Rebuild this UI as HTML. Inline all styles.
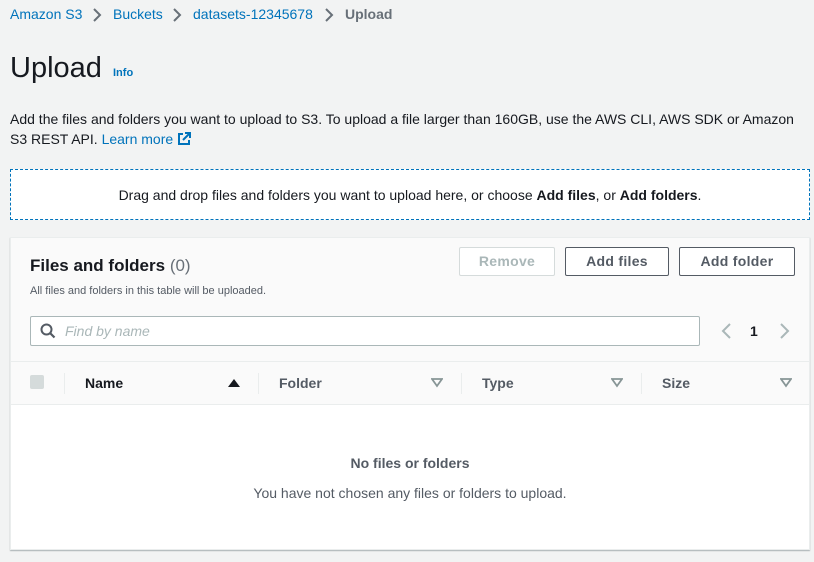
<!DOCTYPE html>
<html><head><meta charset="utf-8"><style>
*{box-sizing:border-box;margin:0;padding:0}
body{width:814px;height:562px;background:#f2f3f3;font-family:"Liberation Sans",sans-serif;color:#16191f;position:relative;overflow:hidden}
.a{position:absolute;white-space:nowrap}
.lnk{color:#0073bb}
.btn{position:absolute;top:247px;height:29px;border:1px solid #545b64;border-radius:2px;background:#fff;font-size:14px;font-weight:bold;color:#545b64;text-align:center;line-height:27px;letter-spacing:.3px}
.th{position:absolute;top:375px;font-size:14px;font-weight:bold;color:#545b64}
.sep{position:absolute;top:373px;width:1px;height:21px;background:#eaeded}
.tri{position:absolute;top:378px}
</style></head><body>
<div class="a" style="left:10px;top:6px;font-size:14px"><span class="lnk">Amazon S3</span></div>
<svg class="a" style="left:92px;top:8px" width="10" height="14"><path d="M2 1l6 6-6 6" stroke="#687078" stroke-width="2" fill="none"/></svg>
<div class="a lnk" style="left:113px;top:6px;font-size:14px">Buckets</div>
<svg class="a" style="left:172px;top:8px" width="10" height="14"><path d="M2 1l6 6-6 6" stroke="#687078" stroke-width="2" fill="none"/></svg>
<div class="a lnk" style="left:193px;top:6px;font-size:14px">datasets-12345678</div>
<svg class="a" style="left:324px;top:8px" width="10" height="14"><path d="M2 1l6 6-6 6" stroke="#687078" stroke-width="2" fill="none"/></svg>
<div class="a" style="left:345px;top:6px;font-size:14px;font-weight:bold;color:#687078">Upload</div>

<div class="a" style="left:10px;top:52px;font-size:29px;color:#16191f">Upload</div>
<div class="a lnk" style="left:113px;top:67px;font-size:11px;font-weight:bold">Info</div>

<div class="a" style="left:10px;top:109px;font-size:14px;line-height:20px">Add the files and folders you want to upload to S3. To upload a file larger than 160GB, use the AWS CLI, AWS SDK or Amazon<br>S3 REST API. <span class="lnk">Learn more</span> <svg width="14" height="14" style="vertical-align:-2px"><path d="M6 2H2v10h10V8" stroke="#0073bb" stroke-width="2" fill="none"/><path d="M8 1h5v5M13 1L6 8" stroke="#0073bb" stroke-width="2" fill="none"/></svg></div>

<div class="a" style="left:10px;top:169px;width:800px;height:51px;border:1px dashed #0073bb;background:#fff;text-align:center;line-height:51px;font-size:14px">Drag and drop files and folders you want to upload here, or choose <b>Add files</b>, or <b>Add folders</b>.</div>

<div class="a" style="left:10px;top:237px;width:800px;height:313px;background:#fff;border:1px solid #eaeded;box-shadow:0 1px 1px 0 rgba(0,28,36,.3)">
 <div style="position:absolute;left:0;top:0;width:798px;height:167px;background:#fafafa;border-bottom:1px solid #eaeded"></div>
 <div style="position:absolute;left:0;top:123px;width:798px;height:1px;background:#eaeded"></div>
</div>
<div class="a" style="left:30px;top:256px;font-size:17px;font-weight:bold">Files and folders <span style="font-weight:normal;color:#687078">(0)</span></div>
<div class="a" style="left:30px;top:285px;font-size:11px;color:#545b64">All files and folders in this table will be uploaded.</div>
<div class="btn" style="left:459px;width:96px;border-color:#d5dbdb;color:#aab7b8">Remove</div>
<div class="btn" style="left:565px;width:104px">Add files</div>
<div class="btn" style="left:679px;width:116px">Add folder</div>

<div class="a" style="left:30px;top:316px;width:670px;height:30px;border:1px solid #aab7b8;border-radius:2px;background:#fff"></div>
<svg class="a" style="left:40px;top:322px" width="16" height="18"><circle cx="6.5" cy="7.5" r="5" stroke="#545b64" stroke-width="2" fill="none"/><path d="M10 11l4.5 4.5" stroke="#545b64" stroke-width="2.2"/></svg>
<div class="a" style="left:65px;top:323px;font-size:14px;font-style:italic;color:#aab7b8">Find by name</div>
<svg class="a" style="left:720px;top:322px" width="12" height="18"><path d="M10 2L3 9l7 7" stroke="#aab7b8" stroke-width="2" fill="none"/></svg>
<div class="a" style="left:750px;top:323px;font-size:14px;font-weight:bold">1</div>
<svg class="a" style="left:779px;top:322px" width="12" height="18"><path d="M2 2l7 7-7 7" stroke="#aab7b8" stroke-width="2" fill="none"/></svg>

<div class="a" style="left:30px;top:375px;width:14px;height:14px;background:#d5dbdb;border-radius:2px"></div>
<div class="sep" style="left:64px"></div>
<div class="th" style="left:85px;color:#16191f">Name</div>
<svg class="tri" style="left:228px" width="12" height="10"><path d="M0 9L6 1l6 8z" fill="#16191f"/></svg>
<div class="sep" style="left:258px"></div>
<div class="th" style="left:279px">Folder</div>
<svg class="tri" style="left:431px" width="12" height="10"><path d="M1 1h10L6 8z" stroke="#879596" stroke-width="1.8" fill="none"/></svg>
<div class="sep" style="left:461px"></div>
<div class="th" style="left:482px">Type</div>
<svg class="tri" style="left:611px" width="12" height="10"><path d="M1 1h10L6 8z" stroke="#879596" stroke-width="1.8" fill="none"/></svg>
<div class="sep" style="left:641px"></div>
<div class="th" style="left:662px">Size</div>
<svg class="tri" style="left:780px" width="12" height="10"><path d="M1 1h10L6 8z" stroke="#879596" stroke-width="1.8" fill="none"/></svg>

<div class="a" style="left:10px;top:455px;width:800px;text-align:center;font-size:14px;font-weight:bold;color:#545b64">No files or folders</div>
<div class="a" style="left:10px;top:485px;width:800px;text-align:center;font-size:14px;color:#545b64">You have not chosen any files or folders to upload.</div>
</body></html>
